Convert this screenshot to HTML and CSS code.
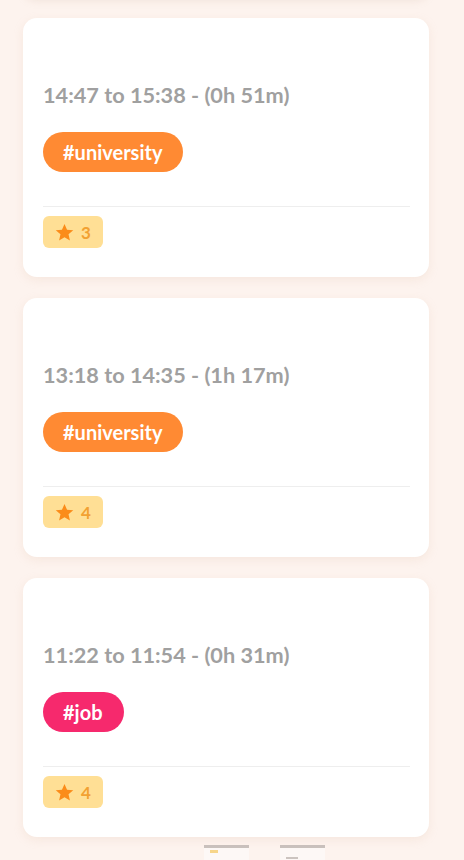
FILE: index.html
```html
<!DOCTYPE html>
<html lang="en">
<head>
    <meta charset="UTF-8">
    <meta name="viewport" content="width=device-width, initial-scale=1.0">
    <title>Sessions</title>
    <link rel="stylesheet" href="styles.css">
</head>
<body>
    <div class="list">
        <div class="card">
            <div class="time">14:47 to 15:38 - (0h 51m)</div>
            <div class="tags"><span class="tag tag-university">#university</span></div>
            <div class="card-footer">
                <span class="rating"><svg viewBox="0 0 24 24" class="star"><path d="M12 2.2l2.9 6.6 7.1.6-5.4 4.7 1.6 7-6.2-3.7-6.2 3.7 1.6-7L2 9.4l7.1-.6z"/></svg>3</span>
            </div>
        </div>
        <div class="card">
            <div class="time">13:18 to 14:35 - (1h 17m)</div>
            <div class="tags"><span class="tag tag-university">#university</span></div>
            <div class="card-footer">
                <span class="rating"><svg viewBox="0 0 24 24" class="star"><path d="M12 2.2l2.9 6.6 7.1.6-5.4 4.7 1.6 7-6.2-3.7-6.2 3.7 1.6-7L2 9.4l7.1-.6z"/></svg>4</span>
            </div>
        </div>
        <div class="card">
            <div class="time">11:22 to 11:54 - (0h 31m)</div>
            <div class="tags"><span class="tag tag-job">#job</span></div>
            <div class="card-footer">
                <span class="rating"><svg viewBox="0 0 24 24" class="star"><path d="M12 2.2l2.9 6.6 7.1.6-5.4 4.7 1.6 7-6.2-3.7-6.2 3.7 1.6-7L2 9.4l7.1-.6z"/></svg>4</span>
            </div>
        </div>
    </div>
    <div class="thumbs">
        <div class="thumb">
            <div class="thumb-bar"></div>
            <div class="thumb-body"><span class="thumb-chip"></span></div>
        </div>
        <div class="thumb">
            <div class="thumb-bar"></div>
            <div class="thumb-body thumb-plain"><span class="thumb-text"></span></div>
        </div>
    </div>
</body>
</html>
```

FILE: styles.css
```css
body {
    margin: 0;
    padding: 0;
    background-color: #fdf3ee;
    font-family: Lato, "Noto Sans", sans-serif;
    height: 860px;
    overflow: hidden;
}
.list {
    display: flex;
    flex-direction: column;
    gap: 21px;
    padding: 18px 35px 0 23px;
    position: relative;
}
.list::before {
    content: "";
    position: absolute;
    left: 23px;
    right: 35px;
    top: -30px;
    height: 27px;
    background: #fff;
    border-radius: 14px;
    box-shadow: 0 3px 8px rgba(200, 170, 150, 0.25);
}
.card {
    background-color: #fff;
    border-radius: 14px;
    box-shadow: 0 3px 10px rgba(225, 190, 170, 0.22);
    padding: 64px 19px 29px 20px;
}
.time {
    font-size: 21.7px;
    line-height: 26px;
    font-weight: 700;
    color: #a0a0a0;
}
.tags {
    display: flex;
    margin-top: 24px;
}
.tag {
    height: 40px;
    line-height: 40px;
    padding: 0 21px 0 20px;
    border-radius: 20px;
    color: #fff;
    font-size: 20px;
    font-weight: 700;
}
.tag-university {
    background-color: #ff8a33;
}
.tag-job {
    background-color: #f6296d;
}
.card-footer {
    margin-top: 34px;
    border-top: 1px solid #eeeeee;
    padding-top: 9px;
    display: flex;
}
.rating {
    display: flex;
    align-items: center;
    gap: 6px;
    height: 32px;
    padding: 0 12px 0 11px;
    border-radius: 6px;
    background-color: #ffdf95;
    color: #f2a132;
    font-size: 17px;
    font-weight: 700;
}
.star {
    width: 21px;
    height: 21px;
    fill: #fb8c1a;
}
.thumbs {
    display: flex;
    gap: 31px;
    margin-top: 8px;
    padding-left: 204px;
}
.thumb {
    width: 45px;
    background: #fdf8f6;
}
.thumb-bar {
    height: 3px;
    background-color: #c9c1bd;
}
.thumb-body {
    padding: 2px 6px;
    height: 12px;
}
.thumb-chip {
    display: block;
    width: 8px;
    height: 3px;
    background: #f7d58a;
}
.thumb-plain {
    padding-top: 9px;
}
.thumb-text {
    display: block;
    width: 12px;
    height: 2px;
    background: #ccc4c0;
}
```
